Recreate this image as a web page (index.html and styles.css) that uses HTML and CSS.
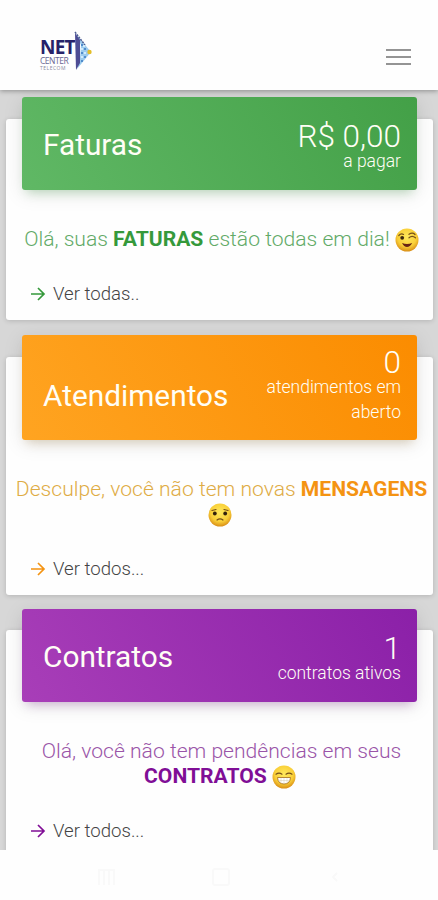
FILE: index.html
```html
<!DOCTYPE html>
<html lang="pt-BR">
<head>
<meta charset="utf-8">
<meta name="viewport" content="width=device-width, initial-scale=1">
<title>Net Center</title>
<link rel="stylesheet" href="styles.css">
</head>
<body>
<div class="app">
  <header class="topbar">
    <div class="logo">
      <div class="logo-text">
        <span class="logo-net">NET</span>
        <span class="logo-center">CENTER</span>
        <span class="logo-sub">TELECOM</span>
      </div>
      <svg class="logo-mark" viewBox="0 0 18 42" width="18" height="42">
        <path d="M2 3 L17 21 L3 38 L6 28 L7 14 Z" fill="#9ccbed"/>
        <path d="M1 2 L6 9 L6 32 L2 39 Z" fill="#4d4c94"/>
        <path d="M1 1 L11 14" stroke="#4c5c91" stroke-width="1.5" stroke-dasharray="2 1"/>
        <g fill="#3979c1"><circle cx="8" cy="14" r="1"/><circle cx="11" cy="18" r="1"/><circle cx="8" cy="22" r="1"/><circle cx="11" cy="26" r="1"/><circle cx="8" cy="30" r="1"/></g>
        <g fill="#e3f6ff"><circle cx="10" cy="15" r="1"/><circle cx="8" cy="18" r="1"/><circle cx="11" cy="22" r="1"/><circle cx="8" cy="26" r="1"/></g>
        <circle cx="15.5" cy="21" r="2.2" fill="#e3bd28"/>
      </svg>
    </div>
    <div class="menu"><i></i><i></i><i></i></div>
  </header>
  <main class="content">
    <section class="card green">
      <div class="banner">
        <h2>Faturas</h2>
        <div class="stat"><strong>R$ 0,00</strong><span>a pagar</span></div>
      </div>
      <p class="message"><span class="line">Olá, suas <b>FATURAS</b> estão todas em dia!
        <svg class="emoji" viewBox="0 0 24 24"><use href="#face"/><circle cx="7.2" cy="9.8" r="1.9" fill="#3b2610"/><path d="M3.8 7.5 Q6 5 8.5 6.4" class="brow"/><path d="M14 9.8 Q17 7 20.5 9.8 M14 6.3 Q17.5 4 20 6.5" class="brow"/><path d="M7 15 Q12 17.2 17.2 15 Q15 19 12 19 Q9 19 7 15Z" fill="#682414"/></svg></span></p>
      <a class="link"><svg class="arrow" viewBox="0 0 16 16"><path d="M1 8H14M8 2L14 8L8 14"/></svg>Ver todas..</a>
    </section>
    <section class="card orange">
      <div class="banner">
        <h2>Atendimentos</h2>
        <div class="stat"><strong>0</strong><span>atendimentos em<br>aberto</span></div>
      </div>
      <p class="message"><span class="line">Desculpe, você não tem novas <b>MENSAGENS</b></span><span class="line second">
        <svg class="emoji" viewBox="0 0 24 24"><use href="#face"/><circle cx="6.8" cy="10.5" r="1.9" fill="#33220c"/><circle cx="17.2" cy="10.5" r="1.9" fill="#33220c"/><path d="M4 7.5L8 6.5M16 6.5L20 7.5" class="brow"/><path d="M9 17Q12 14.6 15 17" class="brow"/></svg></span></p>
      <a class="link"><svg class="arrow" viewBox="0 0 16 16"><path d="M1 8H14M8 2L14 8L8 14"/></svg>Ver todos...</a>
    </section>
    <section class="card purple">
      <div class="banner">
        <h2>Contratos</h2>
        <div class="stat"><strong>1</strong><span>contratos ativos</span></div>
      </div>
      <p class="message"><span class="line">Olá, você não tem pendências em seus</span><span class="line second"><b>CONTRATOS</b>
        <svg class="emoji" viewBox="0 0 24 24"><use href="#face"/><path d="M4 9.2Q7 7 10 9.2M14 9.2Q17 7 20 9.2" class="brow"/><path d="M5.5 12.5H18.5Q18 19 12 19Q6 19 5.5 12.5Z" fill="#fff" stroke="#a36b18" stroke-width=".8"/><path d="M6 15.5H18M9 12.8V18M12 12.8V19M15 12.8V18" stroke="#ccc3a5" stroke-width=".4"/></svg></span></p>
      <a class="link"><svg class="arrow" viewBox="0 0 16 16"><path d="M1 8H14M8 2L14 8L8 14"/></svg>Ver todos...</a>
    </section>
  </main>
  <footer class="navbar">
    <svg viewBox="0 0 20 20"><path d="M2 2V18M7 2V18M12 2V18M17 2V18M2 3H17"/></svg>
    <svg viewBox="0 0 20 20"><rect x="2" y="2" width="16" height="16" rx="2"/></svg>
    <svg viewBox="0 0 20 20"><path d="M12 6L8 10L12 14"/></svg>
  </footer>
</div>
<svg class="defs" width="0" height="0">
  <defs>
    <radialGradient id="skin" cx=".5" cy=".38" r=".62"><stop offset="0" stop-color="#ffe95c"/><stop offset=".65" stop-color="#f9cf38"/><stop offset="1" stop-color="#d98e16"/></radialGradient>
    <circle id="face" cx="12" cy="12" r="11.5" fill="url(#skin)"/>
  </defs>
</svg>
</body>
</html>
```
FILE: styles.css
```css
* { box-sizing: border-box; }
body { margin: 0; background: #fefefe; font-family: Roboto, "Liberation Sans", sans-serif; font-weight: 300; }
.app { width: 438px; height: 900px; display: flex; flex-direction: column; overflow: hidden; }
.topbar { height: 90px; flex: none; display: flex; justify-content: space-between; align-items: flex-start; padding: 31px 27px 0 40px; background: #fefefe; box-shadow: 0 1px 5px rgba(0,0,0,.35); z-index: 1; }
.logo { display: flex; }
.logo-text { display: flex; flex-direction: column; width: 35px; padding-top: 7px; color: #262269; white-space: nowrap; }
.logo-net { font: 700 19px/19px "Open Sans", sans-serif; letter-spacing: -.8px; }
.logo-center { font: 400 8.5px/8px "Open Sans", sans-serif; letter-spacing: -.5px; color: #6a6793; }
.logo-sub { font: 400 5px/6px "Open Sans", sans-serif; letter-spacing: .5px; color: #8b899f; }
.logo-mark { margin-left: -1px; }
.menu { display: flex; flex-direction: column; gap: 5px; margin-top: 18px; }
.menu i { width: 25px; height: 2px; background: #949494; }
.content { height: 760px; flex: none; background: #d7d7d7; padding: 29px 5px 0 6px; overflow: hidden; }
.card { background: #fefefe; border-radius: 3px; box-shadow: 0 1px 5px rgba(0,0,0,.16); padding: 0 16px 14px; display: flow-root; }
.green { --main: #35993b; --soft: #62aa67; --g: linear-gradient(60deg, #60b865, #43a047); --shade: rgba(76,175,80,.32); height: 201px; margin-bottom: 37px; }
.orange { --main: #f49312; --soft: #deac45; --g: linear-gradient(60deg, #ffa421, #fb8c00); --shade: rgba(170,125,45,.28); height: 238px; margin-bottom: 35px; }
.purple { --main: #800e96; --soft: #9a55a8; --g: linear-gradient(60deg, #a83eb8, #8b20a8); --shade: rgba(130,40,150,.3); height: 240px; }
.banner { height: 93px; margin-top: -22px; border-radius: 3px; background: var(--g); box-shadow: 0 4px 20px rgba(0,0,0,.1), 0 7px 10px -5px var(--shade); padding: 0 16px 0 21px; color: #fffef5; display: flex; align-items: center; justify-content: space-between; }
.orange .banner { height: 105px; }
.purple .banner { margin-top: -21px; }
h2 { margin: 3px 0 0; font-size: 29.8px; font-weight: 400; line-height: 36px; }
.orange h2 { padding-top: 13px; }
.stat { display: flex; flex-direction: column; text-align: right; align-self: flex-start; padding-top: 27px; }
.orange .stat { padding-top: 15px; }
.stat strong { font-size: 31.5px; line-height: 25px; font-weight: 300; }
.stat span { font-size: 17.5px; line-height: 25px; }
.message { margin: 36px -18px 31px -14px; font-size: 21.1px; line-height: 25px; color: var(--soft); text-align: center; display: flex; flex-direction: column; align-items: center; }
.line { display: block; height: 25px; white-space: nowrap; }
.second { margin-right: 3px; }
.message b { font-weight: 700; color: var(--main); }
.emoji { width: 24px; height: 24px; vertical-align: -6px; overflow: visible; }
.brow { fill: none; stroke: #765019; stroke-width: 1.2; stroke-linecap: round; }
.link { display: flex; align-items: center; height: 24px; margin-left: 8px; font-size: 18.6px; color: #444; }
.arrow { width: 16px; height: 16px; margin-right: 7px; fill: none; stroke: var(--main); stroke-width: 1.7; }
.navbar { height: 50px; flex: none; display: grid; grid-template-columns: 20px 20px 20px; column-gap: 94px; padding: 17px 0 0 97px; }
.navbar svg { width: 20px; height: 20px; fill: none; stroke: #f9f9f9; stroke-width: 2; }
.defs { position: absolute; }
```
